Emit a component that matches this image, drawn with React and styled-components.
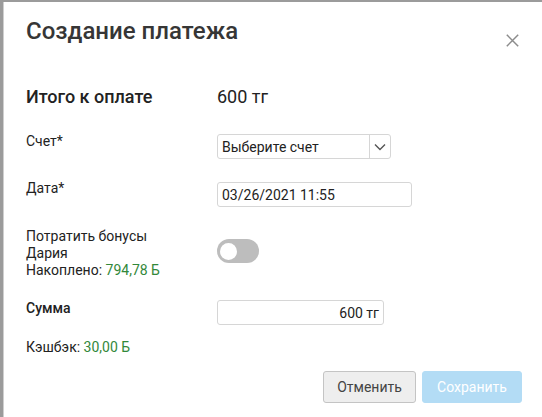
import React from "react";
import styled, { createGlobalStyle } from "styled-components";

const Global = createGlobalStyle`
  html, body { margin: 0; padding: 0; }
  body {
    width: 542px; height: 417px; overflow: hidden;
    background: #9b9b9b;
    font-family: Roboto, "Noto Sans", Arial, sans-serif;
  }
`;

const Modal = styled.div`
  margin: 2px 0 0 3px;
  height: 415px;
  background: #fff;
  border-left: 1px solid #cfcfcf;
  box-sizing: border-box;
  padding: 16px 20px 0 22px;
  display: flex;
  flex-direction: column;
`;

const Header = styled.div`
  display: flex;
  justify-content: space-between;
  align-items: flex-start;
  height: 29px;
`;

const Title = styled.h2`
  margin: 0;
  font-size: 24px;
  font-weight: 500;
  color: #363636;
  line-height: 26px;
`;

const Close = styled.button`
  border: 0; background: none; padding: 0;
  margin: 16px 3px 0 0;
  width: 13px; height: 13px;
  cursor: pointer;
  display: flex;
`;

const Row = styled.div`
  display: grid;
  grid-template-columns: 191px 1fr;
  align-items: ${p => p.$align || "start"};
  justify-items: start;
  margin-top: ${p => p.$mt || 0}px;
`;

const Label = styled.div`
  font-size: 14px;
  line-height: 17px;
  color: #222;
  font-weight: ${p => (p.$bold ? 500 : 400)};
`;

const TotalText = styled.div`
  font-size: 18px;
  font-weight: ${p => (p.$bold ? 500 : 400)};
  color: #222;
  line-height: 22px;
`;

const Green = styled.span`
  color: #32883a;
`;

const Field = styled.div`
  margin-top: ${p => p.$offset || 0}px;
  width: ${p => p.$w}px;
  height: 25px;
  box-sizing: border-box;
  border: 1px solid #d6d6d6;
  border-radius: 3px;
  font-size: 14px;
  color: #222;
  display: flex;
  align-items: center;
  justify-content: ${p => (p.$right ? "flex-end" : "flex-start")};
  padding: ${p => (p.$select ? "0 0 0 4px" : "0 4px 0 4px")};
`;

const SelectText = styled.span`
  flex: 1;
`;

const Arrow = styled.span`
  width: 20px;
  height: 100%;
  border-left: 1px solid #d6d6d6;
  display: flex;
  align-items: center;
  justify-content: center;
`;

const Toggle = styled.div`
  margin-top: 11px;
  width: 42px;
  height: 24px;
  border-radius: 12px;
  background: #bdbdbd;
  position: relative;
  &::after {
    content: "";
    position: absolute;
    left: 3px; top: 4px;
    width: 17px; height: 17px;
    border-radius: 50%;
    background: #fff;
  }
`;

const Footer = styled.div`
  display: flex;
  justify-content: flex-end;
  gap: 6px;
  margin-top: 15px;
`;

const Button = styled.button`
  width: ${p => p.$w}px;
  height: 32px;
  padding: 0;
  border-radius: 3px;
  font-family: inherit;
  font-size: 14px;
  border: 1px solid ${p => (p.$primary ? "#b3dcf5" : "#c4c4c4")};
  background: ${p => (p.$primary ? "#b3dcf5" : "#eeeeee")};
  color: ${p => (p.$primary ? "#fff" : "#444")};
`;

export default function App() {
  return (
    <>
      <Global />
      <Modal>
        <Header>
          <Title>Создание платежа</Title>
          <Close aria-label="close">
            <svg width="13" height="13" viewBox="0 0 13 13">
              <path d="M0.8 0.8L12.2 12.2M12.2 0.8L0.8 12.2" stroke="#8c8c8c" strokeWidth="1.5" />
            </svg>
          </Close>
        </Header>
        <Row $mt={39} $align="center">
          <TotalText $bold>Итого к оплате</TotalText>
          <TotalText>600 тг</TotalText>
        </Row>
        <Row $mt={25}>
          <Label>Счет*</Label>
          <Field $w={174} $offset={1} $select>
            <SelectText>Выберите счет</SelectText>
            <Arrow>
              <svg width="12" height="8" viewBox="0 0 12 8">
                <path d="M1 1.5L6 6.5L11 1.5" stroke="#555" strokeWidth="1.4" fill="none" />
              </svg>
            </Arrow>
          </Field>
        </Row>
        <Row $mt={21}>
          <Label>Дата*</Label>
          <Field $w={195} $offset={2}>03/26/2021 11:55</Field>
        </Row>
        <Row $mt={21}>
          <Label>
            Потратить бонусы<br />Дария<br />Накоплено: <Green>794,78 Б</Green>
          </Label>
          <Toggle />
        </Row>
        <Row $mt={21}>
          <Label $bold>Сумма</Label>
          <Field $w={167} $right>600 тг</Field>
        </Row>
        <Row $mt={14}>
          <Label>Кэшбэк: <Green>30,00 Б</Green></Label>
        </Row>
        <Footer>
          <Button $w={93}>Отменить</Button>
          <Button $primary $w={100}>Сохранить</Button>
        </Footer>
      </Modal>
    </>
  );
}
